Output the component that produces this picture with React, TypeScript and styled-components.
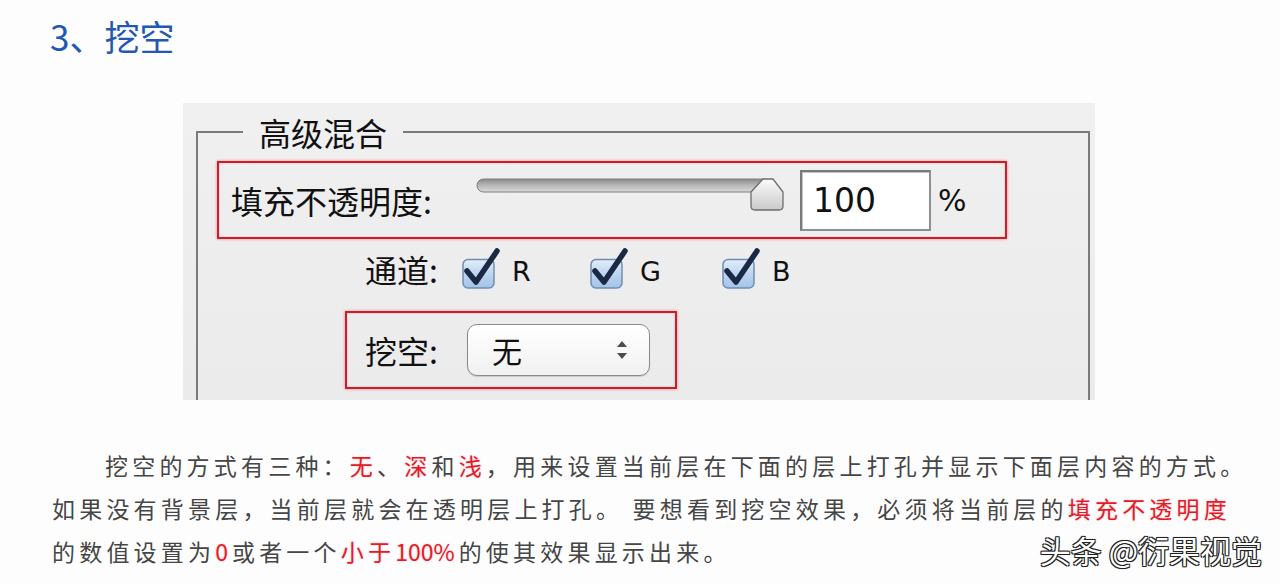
import styled, { createGlobalStyle } from "styled-components";

const GlobalStyle = createGlobalStyle`
  html, body {
    margin: 0;
    padding: 0;
    background: #fdfdfe;
  }
  body {
    font-family: "Noto Sans CJK SC", "Noto Sans", sans-serif;
  }
`;

const CJK = `"Noto Sans CJK SC", "Noto Sans", sans-serif`;
const LATIN = `"DejaVu Sans", "Noto Sans CJK SC", sans-serif`;

const CHANNELS = [
  { key: "R", width: 128 },
  { key: "G", width: 132 },
  { key: "B", width: 80 },
];

function CheckMark() {
  return (
    <svg width="40" height="42" viewBox="0 0 40 42">
      <defs>
        <linearGradient id="cbFill" x1="0" y1="0" x2="0" y2="1">
          <stop offset="0" stopColor="#e4eefa" />
          <stop offset="0.5" stopColor="#bdd5f0" />
          <stop offset="1" stopColor="#a3c3e8" />
        </linearGradient>
      </defs>
      <rect
        x="1"
        y="11.5"
        width="31"
        height="28.5"
        rx="5"
        fill="url(#cbFill)"
        stroke="#6f8db3"
        strokeWidth="1.5"
      />
      <path
        d="M5 23 L14 34 L35 3"
        fill="none"
        stroke="#1b2945"
        strokeWidth="5.5"
        strokeLinecap="round"
        strokeLinejoin="round"
      />
    </svg>
  );
}

function Slider() {
  return (
    <svg width="310" height="34" viewBox="0 0 310 34">
      <defs>
        <linearGradient id="trackFill" x1="0" y1="0" x2="0" y2="1">
          <stop offset="0" stopColor="#8a8a8a" />
          <stop offset="0.45" stopColor="#b4b4b4" />
          <stop offset="1" stopColor="#dadada" />
        </linearGradient>
        <linearGradient id="thumbFill" x1="0" y1="0" x2="0" y2="1">
          <stop offset="0" stopColor="#fbfbfb" />
          <stop offset="1" stopColor="#c9c9c9" />
        </linearGradient>
      </defs>
      <rect
        x="1"
        y="1"
        width="294"
        height="13"
        rx="6.5"
        fill="url(#trackFill)"
        stroke="#7e7e7e"
        strokeWidth="1"
      />
      <path
        d="M287 1 L297 1 L307 14 L307 28 Q307 32 303 32 L279 32 Q275 32 275 28 L275 14 Z"
        fill="url(#thumbFill)"
        stroke="#6e6e6e"
        strokeWidth="1.3"
        strokeLinejoin="round"
      />
    </svg>
  );
}

function SelectArrows() {
  return (
    <svg width="12" height="22" viewBox="0 0 12 22">
      <path d="M6 2 L11 8 L1 8 Z" fill="#4c4c4c" />
      <path d="M6 20 L11 14 L1 14 Z" fill="#4c4c4c" />
    </svg>
  );
}

export default function App() {
  return (
    <Page>
      <GlobalStyle />
      <Heading>3、挖空</Heading>

      <Panel>
        <Group>
          <Legend>高级混合</Legend>

          <Highlight $width={790} $padLeft={12}>
            <Label $width={245}>填充不透明度:</Label>
            <SliderWrap>
              <Slider />
            </SliderWrap>
            <NumberBox>100</NumberBox>
            <Unit>%</Unit>
          </Highlight>

          <ChannelRow>
            <Label $width={97}>通道:</Label>
            {CHANNELS.map((c) => (
              <Channel key={c.key} $width={c.width}>
                <CheckMark />
                <ChannelName>{c.key}</ChannelName>
              </Channel>
            ))}
          </ChannelRow>

          <Highlight $width={332} $padLeft={18} $offset={147} $top={21}>
            <Label $width={102}>挖空:</Label>
            <SelectBox>
              <span>无</span>
              <SelectArrows />
            </SelectBox>
          </Highlight>
        </Group>
      </Panel>

      <Paragraph>
        <Indent>挖空的方式有三种：</Indent>
        <Red>无</Red>、<Red>深</Red>和<Red>浅</Red>
        ，用来设置当前层在下面的层上打孔并显示下面层内容的方式。
        <br />
        如果没有背景层，当前层就会在透明层上打孔。 要想看到挖空效果，必须将当前层的
        <Red>填充不透明度</Red>
        <br />
        的数值设置为<Red><Num>0</Num></Red>或者一个<Red>小于<Num>100%</Num></Red>
        的使其效果显示出来。
      </Paragraph>

      <Watermark>头条 @衍果视觉</Watermark>
    </Page>
  );
}

const Page = styled.div`
  position: relative;
  width: 1280px;
  height: 584px;
  overflow: hidden;
  padding-top: 12px;
  box-sizing: border-box;
`;

const Heading = styled.h1`
  margin: 0 0 0 50px;
  font-family: ${CJK};
  font-size: 35px;
  font-weight: 400;
  line-height: 48px;
  color: #2458b0;
`;

const Panel = styled.div`
  margin: 43px 0 0 183px;
  width: 912px;
  height: 297px;
  overflow: hidden;
  background: linear-gradient(#f0f0f1, #ebebec);
`;

const Group = styled.fieldset`
  margin: 10px 5px 0 13px;
  padding: 10px 0 40px 0;
  min-width: 0;
  border: 2px solid #7a7a7a;
  display: flex;
  flex-direction: column;
  align-items: flex-start;
`;

const Legend = styled.legend`
  margin-left: 45px;
  padding: 0 16px;
  font-family: ${CJK};
  font-size: 32px;
  line-height: 38px;
  color: #111;
`;

const Highlight = styled.div<{
  $width: number;
  $padLeft: number;
  $offset?: number;
  $top?: number;
}>`
  display: flex;
  align-items: center;
  box-sizing: border-box;
  width: ${({ $width }) => $width}px;
  height: 78px;
  margin-left: ${({ $offset }) => $offset ?? 19}px;
  margin-top: ${({ $top }) => $top ?? 0}px;
  padding-left: ${({ $padLeft }) => $padLeft}px;
  border: 2px solid #c81f2c;
  box-shadow: 0 0 3px rgba(235, 60, 70, 0.55),
    inset 0 0 2px rgba(235, 60, 70, 0.4);
`;

const Label = styled.span<{ $width: number }>`
  flex-shrink: 0;
  width: ${({ $width }) => $width}px;
  font-family: ${CJK};
  font-size: 32px;
  line-height: 40px;
  color: #111;
`;

const SliderWrap = styled.div`
  align-self: flex-start;
  margin-top: 15px;
  width: 307px;
  height: 34px;
  flex-shrink: 0;
  svg {
    display: block;
  }
`;

const NumberBox = styled.div`
  box-sizing: border-box;
  width: 131px;
  height: 61px;
  margin-left: 17px;
  padding-left: 11px;
  display: flex;
  align-items: center;
  background: #fff;
  border: 2px solid #8e8e8e;
  border-top-color: #7a7a7a;
  border-left-color: #7a7a7a;
  box-shadow: inset 1px 1px 0 #c4c4c4;
  font-family: ${LATIN};
  font-size: 33px;
  color: #111;
`;

const Unit = styled.span`
  margin-left: 7px;
  font-family: ${LATIN};
  font-size: 30px;
  color: #111;
`;

const ChannelRow = styled.div`
  display: flex;
  align-items: center;
  height: 42px;
  margin: 9px 0 0 167px;
`;

const Channel = styled.div<{ $width: number }>`
  display: flex;
  align-items: flex-end;
  gap: 10px;
  width: ${({ $width }) => $width}px;
  svg {
    display: block;
    flex-shrink: 0;
  }
`;

const ChannelName = styled.span`
  font-family: ${LATIN};
  font-size: 27px;
  line-height: 36px;
  color: #111;
`;

const SelectBox = styled.div`
  box-sizing: border-box;
  width: 183px;
  height: 52px;
  display: flex;
  align-items: center;
  justify-content: space-between;
  padding: 0 21px 0 24px;
  border: 1.5px solid #8a8a8a;
  border-radius: 10px;
  background: linear-gradient(#ffffff, #f1f1f1);
  box-shadow: 0 1px 1px rgba(0, 0, 0, 0.15);
  font-family: ${CJK};
  font-size: 30px;
  color: #111;
  svg {
    display: block;
  }
`;

const Paragraph = styled.p`
  margin: 44px 0 0 52px;
  width: 1220px;
  font-family: ${CJK};
  font-size: 23px;
  line-height: 43px;
  letter-spacing: 4.2px;
  color: #464646;
  white-space: nowrap;
`;

const Indent = styled.span`
  padding-left: 53px;
`;

const Red = styled.span`
  color: #e11d2c;
  text-shadow: 0 0 2px rgba(255, 60, 60, 0.35);
`;

const Num = styled.span`
  letter-spacing: 0;
  margin-right: 4px;
`;

const Watermark = styled.div`
  position: absolute;
  right: 18px;
  bottom: 14px;
  font-family: ${CJK};
  font-size: 31px;
  line-height: 40px;
  color: #fff;
  text-shadow: -1px -1px 0 #222, 1px -1px 0 #222, -1px 1px 0 #222,
    1px 1px 0 #222, 0 0 2px #000;
`;
